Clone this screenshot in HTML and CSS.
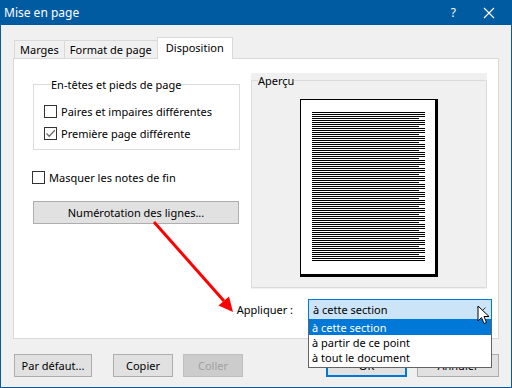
FILE: index.html
```html
<!DOCTYPE html>
<html>
<head>
    <title>Mise en page</title>
    <link rel="stylesheet" href="styles.css">
</head>
<body>
    <div class="window">
        <div class="titlebar">
            <span class="title">Mise en page</span>
            <span class="help">?</span>
            <svg class="close" width="12" height="12" viewBox="0 0 12 12">
                <path d="M1 1 L11 11 M11 1 L1 11" stroke="white" stroke-width="1.2"/>
            </svg>
        </div>

        <div class="content">
            <div class="tabs">
                <div class="tab">Marges</div>
                <div class="tab">Format de page</div>
                <div class="tab active">Disposition</div>
            </div>

            <div class="panel">
                <div class="left-col">
                    <fieldset class="group">
                        <legend>En-têtes et pieds de page</legend>
                        <label class="check"><span class="box"></span>Paires et impaires différentes</label>
                        <label class="check"><span class="box checked">
                            <svg width="11" height="11" viewBox="0 0 11 11"><path d="M1.5 5.5 L4.2 8.3 L9.8 2.2" fill="none" stroke="#6d6d6d" stroke-width="1.3"/></svg>
                        </span>Première page différente</label>
                    </fieldset>
                    <label class="check solo"><span class="box"></span>Masquer les notes de fin</label>
                    <div class="button wide">Numérotation des lignes...</div>
                </div>

                <div class="preview-wrap">
                    <fieldset class="preview">
                        <legend>Aperçu</legend>
                        <div class="page">
                            <div class="text-lines"></div>
                        </div>
                    </fieldset>
                </div>

                <div class="apply-row">
                    <span class="apply-label">Appliquer :</span>
                    <div class="select">
                        <span>à cette section</span>
                        <svg class="caret" width="9" height="6" viewBox="0 0 9 6"><path d="M0.5 0.5 L4.5 4.5 L8.5 0.5" fill="none" stroke="#333" stroke-width="1"/></svg>
                        <ul class="dropdown">
                            <li class="selected">à cette section</li>
                            <li>à partir de ce point</li>
                            <li>à tout le document</li>
                        </ul>
                        <svg class="cursor" width="13" height="20" viewBox="0 0 13 20">
                            <path d="M1 1 L1 16 L4.5 12.5 L7 18.5 L9.5 17.5 L7 11.5 L12 11.5 Z" fill="white" stroke="black" stroke-width="1"/>
                        </svg>
                    </div>
                </div>
            </div>

            <div class="footer">
                <div class="button">Par défaut...</div>
                <div class="button">Copier</div>
                <div class="button disabled">Coller</div>
                <div class="spacer"></div>
                <div class="button default">OK</div>
                <div class="button">Annuler</div>
            </div>
        </div>

        <svg class="arrow" width="512" height="388" viewBox="0 0 512 388">
            <line x1="153" y1="222" x2="223" y2="301" stroke="#ff0000" stroke-width="3"/>
            <polygon points="232,312 217.5,305.5 228,296.5" fill="#ff0000"/>
        </svg>
    </div>
</body>
</html>
```

FILE: styles.css
```css
body {
    margin: 0;
    padding: 0;
    font-family: 'Noto Sans', 'Liberation Sans', sans-serif;
    font-size: 11px;
    color: #000;
}

.window {
    position: relative;
    width: 512px;
    height: 388px;
    box-sizing: border-box;
    border: 1px solid #0a5aa0;
    border-top: none;
    background-color: #f0f0f0;
    display: flex;
    flex-direction: column;
}

.titlebar {
    height: 25px;
    background-color: #005ba1;
    color: white;
    display: flex;
    align-items: center;
    padding-left: 4px;
    margin: 0 -1px;
}

.title {
    flex: 1;
    font-size: 12px;
}

.help {
    margin-right: 27px;
    font-size: 12px;
}

.close {
    margin-right: 17px;
}

.content {
    flex: 1;
    padding: 11px 12px 0 12px;
    display: flex;
    flex-direction: column;
}

.tabs {
    display: flex;
    align-items: flex-end;
    height: 22px;
    margin-left: 1px;
}

.tab {
    height: 17px;
    line-height: 17px;
    padding: 0 5px;
    border: 1px solid #d9d9d9;
    border-bottom: none;
    border-right: none;
    background-color: #f0f0f0;
}

.tab.active {
    height: 21px;
    line-height: 19px;
    padding: 0 8px;
    background-color: white;
    border-right: 1px solid #d9d9d9;
    margin-bottom: -1px;
    position: relative;
    z-index: 1;
}

.panel {
    height: 281px;
    box-sizing: border-box;
    background-color: white;
    border: 1px solid #d9d9d9;
    width: 486px;
    display: grid;
    grid-template-columns: 207px 236px;
    grid-template-rows: 216px auto;
    column-gap: 11px;
    padding: 14px 0 0 19px;
}

.left-col {
    display: flex;
    flex-direction: column;
}

fieldset {
    margin: 0;
    padding: 0;
    border: 1px solid #dcdcdc;
}

legend {
    padding: 0;
    margin-left: 7px;
}

.group {
    width: 207px;
    height: 73px;
    box-sizing: border-box;
    padding: 8px 0 0 10px;
    margin-top: 4px;
}

.check {
    display: flex;
    align-items: center;
    height: 22px;
    white-space: nowrap;
}

.box {
    width: 11px;
    height: 11px;
    border: 1px solid #333;
    background-color: white;
    margin-right: 4px;
    display: flex;
    align-items: center;
    justify-content: center;
}

.solo {
    margin: 16px 0 0 -1px;
}

.button {
    height: 23px;
    box-sizing: border-box;
    border: 1px solid #adadad;
    background-color: #e1e1e1;
    display: flex;
    align-items: center;
    justify-content: center;
}

.wide {
    width: 206px;
    margin-top: 13px;
}

.preview-wrap {
    background-color: #f0f0f0;
    height: 216px;
    box-sizing: border-box;
}

.preview {
    height: 215px;
    box-sizing: border-box;
    display: flex;
    justify-content: center;
    padding-top: 11px;
}

.preview legend {
    margin-left: 6px;
}

.page {
    width: 138px;
    height: 178px;
    background-color: white;
    border: solid black;
    border-width: 1px 3px 3px 1px;
    padding: 12px 0 0 11px;
    box-sizing: border-box;
}

.text-lines {
    width: 113px;
    height: 150px;
    background:
        repeating-linear-gradient(to bottom, transparent 0, transparent 6px, white 6px, white 8px) right top / 6px 100% no-repeat,
        repeating-linear-gradient(to bottom, black 0, black 1px, transparent 1px, transparent 2px);
}

.apply-row {
    grid-column: 1 / 3;
    align-self: start;
    display: flex;
    align-items: center;
    justify-content: flex-end;
    margin: 10px -5px 0 0;
}

.apply-label {
    margin-right: 15px;
}

.select {
    position: relative;
    width: 184px;
    height: 21px;
    box-sizing: border-box;
    border: 1px solid #0078d7;
    background-color: #cce4f7;
    display: flex;
    align-items: center;
    padding-left: 4px;
}

.select span {
    flex: 1;
}

.caret {
    margin-right: 5px;
}

.dropdown {
    position: absolute;
    top: 20px;
    left: -1px;
    width: 184px;
    box-sizing: border-box;
    margin: 0;
    padding: 0 0 2px 0;
    list-style: none;
    background-color: white;
    border: 1px solid #646464;
    border-top: none;
    z-index: 3;
}

.dropdown li {
    height: 15px;
    line-height: 15px;
    padding-left: 3px;
}

.dropdown li.selected {
    background-color: #0078d7;
    color: white;
}

.cursor {
    position: absolute;
    right: 1px;
    top: 5px;
    z-index: 4;
}

.footer {
    display: flex;
    margin-top: 15px;
    margin-left: 1px;
}

.footer .button {
    width: 78px;
    margin-right: 21px;
}

.footer .button:nth-child(2),
.footer .button:nth-child(3) {
    width: 60px;
    margin-right: 10px;
}

.footer .spacer {
    flex: 1;
}

.footer .button.disabled {
    background-color: #cccccc;
    border-color: #bfbfbf;
    color: #a0a0a0;
}

.footer .button.default {
    width: 81px;
    border: 2px solid #0078d7;
    margin-right: 10px;
}

.footer .button:last-child {
    width: 82px;
    margin-right: 0;
}

.arrow {
    position: absolute;
    top: 0;
    left: 0;
    z-index: 5;
    pointer-events: none;
}
```
